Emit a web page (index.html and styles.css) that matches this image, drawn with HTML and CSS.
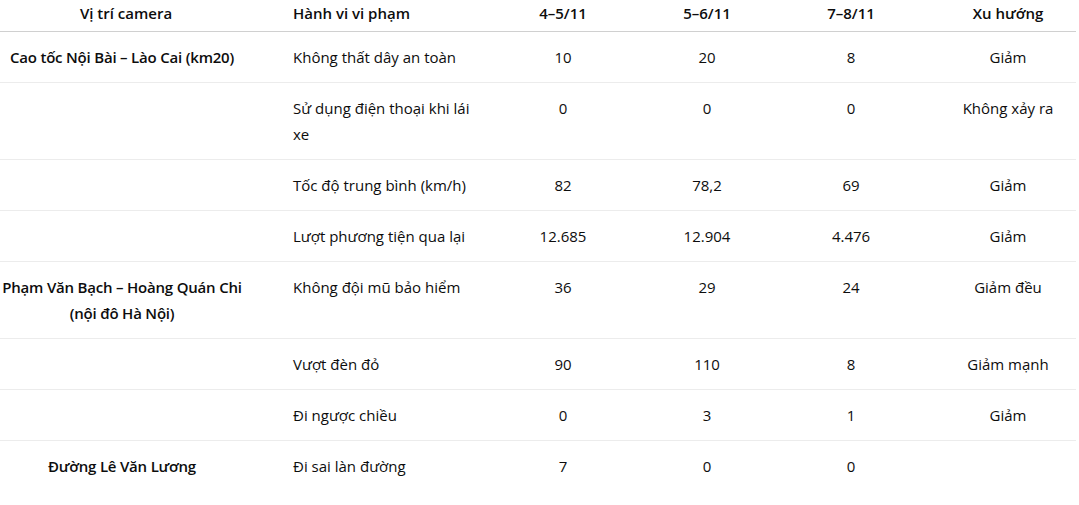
FILE: index.html
```html
<!DOCTYPE html>
<html lang="vi">
<head>
<meta charset="utf-8">
<title>Vi phạm giao thông</title>
<link rel="stylesheet" href="styles.css">
</head>
<body>
<table class="data">
  <colgroup>
    <col class="c-loc"><col class="c-act"><col class="c-num"><col class="c-num"><col class="c-num"><col class="c-trend">
  </colgroup>
  <thead>
    <tr>
      <th class="loc head-loc">Vị trí camera</th>
      <th class="act">Hành vi vi phạm</th>
      <th class="num">4–5/11</th>
      <th class="num">5–6/11</th>
      <th class="num">7–8/11</th>
      <th class="trend">Xu hướng</th>
    </tr>
  </thead>
  <tbody>
    <tr>
      <td class="loc">Cao tốc Nội Bài – Lào Cai (km20)</td>
      <td class="act">Không thất dây an toàn</td>
      <td class="num">10</td><td class="num">20</td><td class="num">8</td>
      <td class="trend">Giảm</td>
    </tr>
    <tr>
      <td class="loc"></td>
      <td class="act">Sử dụng điện thoại khi lái xe</td>
      <td class="num">0</td><td class="num">0</td><td class="num">0</td>
      <td class="trend">Không xảy ra</td>
    </tr>
    <tr>
      <td class="loc"></td>
      <td class="act">Tốc độ trung bình (km/h)</td>
      <td class="num">82</td><td class="num">78,2</td><td class="num">69</td>
      <td class="trend">Giảm</td>
    </tr>
    <tr>
      <td class="loc"></td>
      <td class="act">Lượt phương tiện qua lại</td>
      <td class="num">12.685</td><td class="num">12.904</td><td class="num">4.476</td>
      <td class="trend">Giảm</td>
    </tr>
    <tr>
      <td class="loc">Phạm Văn Bạch – Hoàng Quán Chi (nội đô Hà Nội)</td>
      <td class="act">Không đội mũ bảo hiểm</td>
      <td class="num">36</td><td class="num">29</td><td class="num">24</td>
      <td class="trend">Giảm đều</td>
    </tr>
    <tr>
      <td class="loc"></td>
      <td class="act">Vượt đèn đỏ</td>
      <td class="num">90</td><td class="num">110</td><td class="num">8</td>
      <td class="trend">Giảm mạnh</td>
    </tr>
    <tr>
      <td class="loc"></td>
      <td class="act">Đi ngược chiều</td>
      <td class="num">0</td><td class="num">3</td><td class="num">1</td>
      <td class="trend">Giảm</td>
    </tr>
    <tr>
      <td class="loc">Đường Lê Văn Lương</td>
      <td class="act">Đi sai làn đường</td>
      <td class="num">7</td><td class="num">0</td><td class="num">0</td>
      <td class="trend"></td>
    </tr>
  </tbody>
</table>
</body>
</html>
```

FILE: styles.css
```css
html, body {
  margin: 0;
  padding: 0;
  background: #ffffff;
}

body {
  font-family: "Open Sans", "Noto Sans", sans-serif;
  font-size: 15px;
  color: #0d0d0d;
}

.data {
  width: 1076px;
  table-layout: fixed;
  border-collapse: collapse;
  border-spacing: 0;
}

.c-loc { width: 244px; }
.c-act { width: 247px; }
.c-num { width: 144px; }
.c-trend { width: 153px; }

.data th,
.data td {
  line-height: 26px;
  vertical-align: top;
  padding: 12px 0;
}

.data th {
  font-weight: 600;
  padding: 0 0 5px;
  border-bottom: 1px solid #d0d0d0;
}

.data td {
  border-bottom: 1px solid #ececec;
}

.data tbody tr:last-child td {
  border-bottom: none;
}

.loc {
  text-align: center;
  font-weight: 600;
  letter-spacing: -0.2px;
}

.data .head-loc {
  padding-left: 8px;
  letter-spacing: 0;
}

.data .act {
  text-align: left;
  padding-left: 49px;
  padding-right: 12px;
}

.num {
  text-align: center;
}

.data .trend {
  text-align: center;
  padding-left: 17px;
}
```
